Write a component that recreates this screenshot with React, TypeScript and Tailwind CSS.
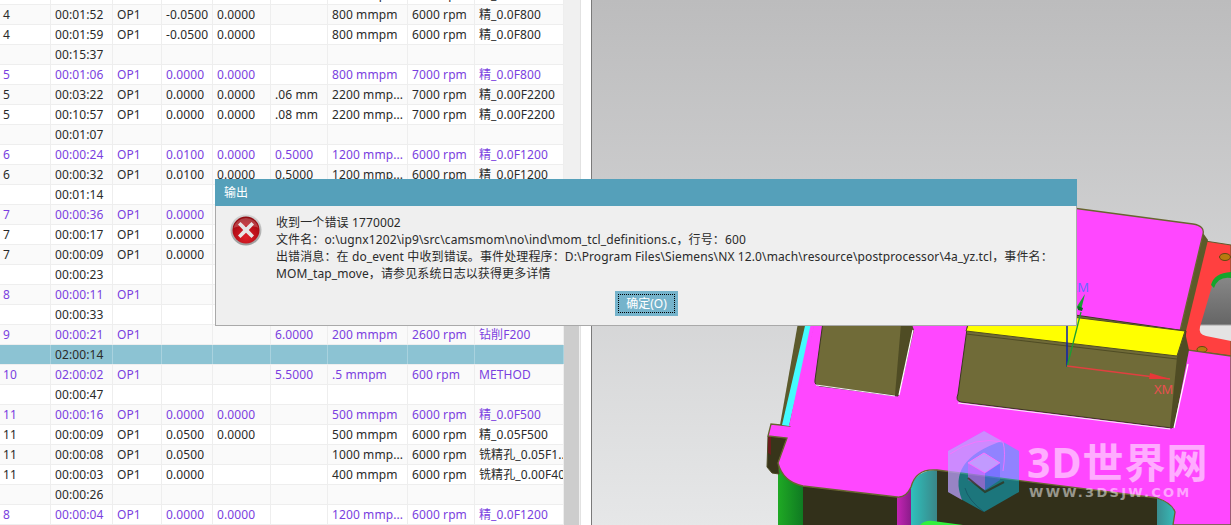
import React from 'react';

type Row = {
  cells: string[];
  tone?: 'normal' | 'purple' | 'selected';
};

const op = (
  n: string,
  time: string,
  a: string,
  b: string,
  c: string,
  feed: string,
  speed: string,
  method: string,
  tone: Row['tone'] = 'normal',
): Row => ({ cells: [n, time, 'OP1', a, b, c, feed, speed, method], tone });

const sum = (time: string, tone: Row['tone'] = 'normal'): Row => ({
  cells: ['', time, '', '', '', '', '', '', ''],
  tone,
});

const rows: Row[] = [
  op('4', '00:01:45', '-0.0500', '0.0000', '', '800 mmpm', '6000 rpm', '精_0.0F800'),
  op('4', '00:01:52', '-0.0500', '0.0000', '', '800 mmpm', '6000 rpm', '精_0.0F800'),
  op('4', '00:01:59', '-0.0500', '0.0000', '', '800 mmpm', '6000 rpm', '精_0.0F800'),
  sum('00:15:37'),
  op('5', '00:01:06', '0.0000', '0.0000', '', '800 mmpm', '7000 rpm', '精_0.0F800', 'purple'),
  op('5', '00:03:22', '0.0000', '0.0000', '.06 mm', '2200 mmp...', '7000 rpm', '精_0.00F2200'),
  op('5', '00:10:57', '0.0000', '0.0000', '.08 mm', '2200 mmp...', '7000 rpm', '精_0.00F2200'),
  sum('00:01:07'),
  op('6', '00:00:24', '0.0100', '0.0000', '0.5000', '1200 mmp...', '6000 rpm', '精_0.0F1200', 'purple'),
  op('6', '00:00:32', '0.0100', '0.0000', '0.5000', '1200 mmp...', '6000 rpm', '精_0.0F1200'),
  sum('00:01:14'),
  op('7', '00:00:36', '0.0000', '', '', '', '', '', 'purple'),
  op('7', '00:00:17', '0.0000', '', '', '', '', ''),
  op('7', '00:00:09', '0.0000', '', '', '', '', ''),
  sum('00:00:23'),
  op('8', '00:00:11', '', '', '', '', '', '', 'purple'),
  sum('00:00:33'),
  op('9', '00:00:21', '', '', '6.0000', '200 mmpm', '2600 rpm', '钻削F200', 'purple'),
  sum('02:00:14', 'selected'),
  op('10', '02:00:02', '', '', '5.5000', '.5 mmpm', '600 rpm', 'METHOD', 'purple'),
  sum('00:00:47'),
  op('11', '00:00:16', '0.0000', '0.0000', '', '500 mmpm', '6000 rpm', '精_0.0F500', 'purple'),
  op('11', '00:00:09', '0.0500', '0.0000', '', '500 mmpm', '6000 rpm', '精_0.05F500'),
  op('11', '00:00:08', '0.0500', '', '', '1000 mmp...', '6000 rpm', '铣精孔_0.05F1..'),
  op('11', '00:00:03', '0.0000', '', '', '400 mmpm', '6000 rpm', '铣精孔_0.00F400'),
  sum('00:00:26'),
  op('8', '00:00:04', '0.0000', '0.0000', '', '1200 mmp...', '6000 rpm', '精_0.0F1200', 'purple'),
];

const colClasses = [
  'w-[51px] pl-[3px]',
  'w-[62px] pl-1',
  'w-[49px] pl-1',
  'w-[51px] pl-1',
  'w-[58px] pl-1',
  'w-[57px] pl-1',
  'w-[80px] pl-1',
  'w-[67px] pl-1',
  'w-[89px] pl-1',
];

const OperationTable = () => (
  <div className="w-[564px] h-full overflow-hidden bg-white tracking-[0.1px]">
    <div className="mt-[-15px]">
      {rows.map((row, i) => (
        <div
          key={i}
          className={`flex h-5 border-b border-[#eeeeee] ${
            row.tone === 'selected' ? 'bg-[#8cc3d3]' : i % 2 === 1 ? 'bg-[#fafafa]' : 'bg-white'
          } ${row.tone === 'purple' ? 'text-[#7a3fe0]' : 'text-[#2a2a2a]'}`}
        >
          {row.cells.map((cell, j) => (
            <div
              key={j}
              className={`${colClasses[j]} shrink-0 border-r whitespace-nowrap overflow-hidden leading-[19px] ${
                row.tone === 'selected' ? 'border-[#a9d2de]' : 'border-[#eeeeee]'
              }`}
            >
              {cell}
            </div>
          ))}
        </div>
      ))}
    </div>
  </div>
);

const Scrollbar = () => (
  <div className="w-4 h-full flex flex-col bg-[#f0f0f0]">
    <div className="h-[250px]" />
    <div className="flex-1 bg-[#cdcdcd] mr-px" />
  </div>
);

const ErrorIcon = () => (
  <svg width="32" height="32" viewBox="0 0 32 32" className="shrink-0">
    <defs>
      <linearGradient id="ring" x1="0" y1="0" x2="0" y2="1">
        <stop offset="0" stopColor="#d8d8d8" />
        <stop offset="1" stopColor="#9a9a9a" />
      </linearGradient>
      <radialGradient id="redball" cx="0.5" cy="0.75" r="0.75">
        <stop offset="0" stopColor="#e0202a" />
        <stop offset="0.6" stopColor="#b80f18" />
        <stop offset="1" stopColor="#8c0c12" />
      </radialGradient>
    </defs>
    <circle cx="16" cy="16" r="15.5" fill="url(#ring)" />
    <circle cx="16" cy="16" r="13.5" fill="url(#redball)" />
    <path d="M3.5 14a12.8 12.8 0 0 1 25 0c-7-3-18-3-25 0z" fill="#ffffff" fillOpacity="0.2" />
    <path
      d="M10.5 8 16 13.2 21.5 8 24 10.5 18.8 16 24 21.5 21.5 24 16 18.8 10.5 24 8 21.5 13.2 16 8 10.5z"
      fill="#e6e6e6"
    />
  </svg>
);

const ErrorDialog = () => (
  <div className="absolute left-[215px] top-[179px] w-[862px] h-[147px] flex flex-col z-20">
    <div className="h-[27px] bg-[#55a0ba] text-white pl-[9px] leading-[27px]">输出</div>
    <div className="flex-1 bg-[#efefef] border-x border-b border-[#a9a9a9] flex flex-col">
      <div className="flex pl-[14px] pt-2">
        <ErrorIcon />
        <div className="ml-[14px] leading-[17px] text-[#2a2a2a] tracking-[0.12px]">
          <div>收到一个错误 1770002</div>
          <div>{'文件名：o:\\ugnx1202\\ip9\\src\\camsmom\\no\\ind\\mom_tcl_definitions.c，行号：600'}</div>
          <div>{'出错消息：在 do_event 中收到错误。事件处理程序：D:\\Program Files\\Siemens\\NX 12.0\\mach\\resource\\postprocessor\\4a_yz.tcl，事件名：'}</div>
          <div>MOM_tap_move，请参见系统日志以获得更多详情</div>
        </div>
      </div>
      <div className="flex justify-end pr-[398px] mt-[9px]">
        <div className="w-[63px] h-[25px] bg-[#75b3cb] p-[3px]">
          <div className="h-full border border-dotted border-black flex items-center justify-center text-white">
            确定(O)
          </div>
        </div>
      </div>
    </div>
  </div>
);

const PartDrawing = () => (
  <svg viewBox="592 0 639 525" className="absolute inset-0 w-full h-full">
    <defs>
      <linearGradient id="greenWall" x1="0" y1="0" x2="1" y2="0">
        <stop offset="0" stopColor="#1fa924" />
        <stop offset="1" stopColor="#0f7a22" />
      </linearGradient>
      <linearGradient id="tealWall" x1="0" y1="0" x2="1" y2="0">
        <stop offset="0" stopColor="#2fc0bc" />
        <stop offset="1" stopColor="#3a8688" />
      </linearGradient>
      <linearGradient id="tealWall2" x1="0" y1="0" x2="1" y2="0">
        <stop offset="0" stopColor="#3a8c90" />
        <stop offset="1" stopColor="#36bcb8" />
      </linearGradient>
      <linearGradient id="purpleWall" x1="0" y1="0" x2="1" y2="0">
        <stop offset="0" stopColor="#c424b4" />
        <stop offset="1" stopColor="#8a1c8a" />
      </linearGradient>
      <linearGradient id="holeWall" x1="0" y1="0" x2="0" y2="1">
        <stop offset="0" stopColor="#8a8a8a" />
        <stop offset="0.75" stopColor="#666666" />
        <stop offset="0.78" stopColor="#e4e4e4" />
        <stop offset="1" stopColor="#e4e4e4" />
      </linearGradient>
    </defs>

    {/* red plate */}
    <path d="M1205 241 L1231 245 L1231 356 L1187 350 L1183 334 Z" fill="#ff4040" stroke="#5f5c2c" />
    <path d="M1231 273 Q1216 272 1212 286 L1200 327 Q1198 334 1206 336 L1231 341 Z" fill="url(#holeWall)" />
    <path d="M1211 285 Q1214 273 1231 272 L1231 278 Q1218 276 1214 288 Z" fill="#16a52c" />
    <ellipse cx="1225" cy="257" rx="5.5" ry="3.5" fill="#b87a10" stroke="#5f4a10" />
    <ellipse cx="1202" cy="349.500" rx="5" ry="3" fill="#b87a10" stroke="#5f4a10" />

    {/* far edge of the magenta plate */}
    <path d="M1203 233 L1180 331 L1186 331 L1208 240 Z" fill="#5c5a2a" />

    {/* dark walls under the front edge */}
    <path d="M803 486 L897 497 L897 525 L803 525 Z" fill="#32301a" />
    <path d="M778 463 L803 486 L803 525 L778 525 Z" fill="url(#greenWall)" />
    <path d="M897 497 L911 487 L911 525 L897 525 Z" fill="url(#purpleWall)" />
    <path d="M911 487 Q916 470 937 470 L937 525 L911 525 Z" fill="url(#tealWall)" />
    <path d="M937 470 L1157 498 L1157 525 L937 525 Z" fill="#32301a" />
    <path d="M1157 498 Q1172 503 1175 512 L1175 525 L1157 525 Z" fill="url(#tealWall2)" />
    <path d="M920 525 Q925 520 933 521 L963 525 Z" fill="#33f03c" />

    {/* notch at the left corner */}
    <path d="M768 436 L787 438 L778 463 L779 474 L772 473 L767 467 Z" fill="#38351a" stroke="#4d4a24" />
    <path d="M768 437 L771 437 L771 455 L768 453 Z" fill="#6b1c1c" />

    {/* magenta top face */}
    <path
      d="M1050 205 L1193 224 Q1205 226 1203 234 L1180 331 L1187 350 L1231 356 L1231 525 L1173 525 L1175 512 Q1172 503 1157 498 L937 470 Q916 468 911 487 Q906 498 897 497 L803 486 Q783 482 778 463 L787 438 L768 436 L771 424 L790 426 L813 326 L813 300 Z"
      fill="#ff47ff"
      stroke="#68652f"
      strokeWidth="1.300"
    />

    {/* cyan strip on the left side */}
    <path d="M802 300 L813 300 L790 426 L780 425 Z" fill="#5c5a2c" />
    <path d="M811 300 L818 300 L789 426 L782 425 Z" fill="#44fbff" />
    <path d="M816 300 L820 300 L792 426 L789 426 Z" fill="#ff47ff" />

    {/* left pocket */}
    <path d="M826 300 L908 300 L898 396 L820 386 Q814 385 815 380 Z" fill="#706b38" stroke="#3b3920" />
    <path d="M903 300 L914 330 L899 395 L895 395 Z" fill="#4f4c24" />
    <path d="M913 330 L899 395" stroke="#ffffff" strokeWidth="1.200" fill="none" />
    <path d="M816 385 L895 396" stroke="#f2f2f2" strokeWidth="1" fill="none" />

    {/* big pocket */}
    <path d="M971 300 L1186 331 L1172 428 L961 402 Q955 401 958 394 Z" fill="#706b38" stroke="#3b3920" />
    <path d="M1185 332 L1177 357 L1170 428 L1174 428 L1189 350 Z" fill="#4f4c24" />
    <path d="M1188 364 L1174 428" stroke="#ffffff" strokeWidth="1.200" fill="none" />
    <path d="M958 403 L1170 429" stroke="#f2f2f2" strokeWidth="1" fill="none" />

    {/* yellow step */}
    <path d="M975 305 L1185 331 L1177 356 L966 331 Z" fill="#ffff00" stroke="#4f4c24" />
    <path d="M966 334 L1177 359" stroke="#4f4c24" strokeWidth="1" fill="none" />

    {/* axes */}
    <path d="M1067 325 L1067 367" stroke="#0b1fb0" strokeWidth="1.500" />
    <path d="M1067 367 L1081 312" stroke="#1aa032" strokeWidth="1.300" />
    <path d="M1085 294 L1081 310 L1076 308 Z" fill="#1aa032" />
    <path d="M1078 306 L1083 308 L1082 311 L1078 310 Z" fill="#0c6b22" />
    <path d="M1067 366 L1170 379" stroke="#e04040" strokeWidth="1.300" />
    <path d="M1150 373 L1170 379 L1149 379 Z" fill="#e83838" />
    <text x="1154" y="394" fontSize="13" fill="#e85050">XM</text>
    <text x="1089" y="292" fontSize="13" fill="#6a6aff" textAnchor="end">ZM</text>

    {/* watermark logo */}
    <path d="M984 431 L1019 451 L1019 492 L984 512 L948 492 L948 451 Z" fill="#00d2ff" fillOpacity="0.43" />
    <path d="M984 431 L948 451 L948 492 L962 500 Q946 460 1002 441 Z" fill="#ff90ff" fillOpacity="0.55" />
    <path d="M950 454 Q975 436 1003 442 Q1006 452 1003 471" stroke="#ff70ff" strokeOpacity="0.8" strokeWidth="1" fill="none" />
    <path d="M984 453 L1000 463 L985 473 L968 463 Z" fill="#c89cff" fillOpacity="0.9" stroke="#ff70ff" strokeWidth="1" />
    <path d="M968 463 L985 473 L985 490 L968 480 Z" fill="#e060ff" fillOpacity="0.55" />
    <path d="M1000 463 L985 473 L985 490 L1000 480 Z" fill="#6060ff" fillOpacity="0.45" />
    <path d="M968 478 L985 492 L1004 482" stroke="#32301a" strokeOpacity="0.75" strokeWidth="2" fill="none" />
    <path d="M965 488 Q968 500 984 512" stroke="#0f3f55" strokeOpacity="0.5" strokeWidth="1" fill="none" />
  </svg>
);

const Viewport = () => (
  <div className="relative flex-1 h-full overflow-hidden border-l border-[#7a7a7a] bg-gradient-to-b from-[#bcbcbd] to-[#e6e7e8]">
    <PartDrawing />
    <div className="absolute left-[435px] top-[440px] text-[#ffffff]/55 font-bold text-[41px] leading-[44px] whitespace-nowrap tracking-[1px] font-['Noto_Sans','Noto_Sans_CJK_SC',sans-serif]">
      3D世界网
    </div>
    <div className="absolute left-[437px] top-[485px] text-[#ffffff]/50 font-bold text-[13px] leading-[16px] whitespace-nowrap tracking-[2.3px] font-['DejaVu_Sans',sans-serif]">
      WWW.3DSJW.COM
    </div>
  </div>
);

export default function App() {
  return (
    <div className="relative w-[1231px] h-[525px] overflow-hidden bg-white flex text-[12px] font-['Noto_Sans','Noto_Sans_CJK_SC',sans-serif]">
      <OperationTable />
      <Scrollbar />
      <div className="w-[11px] h-full bg-white border-l border-[#e2e2e2]" />
      <Viewport />
      <ErrorDialog />
    </div>
  );
}
